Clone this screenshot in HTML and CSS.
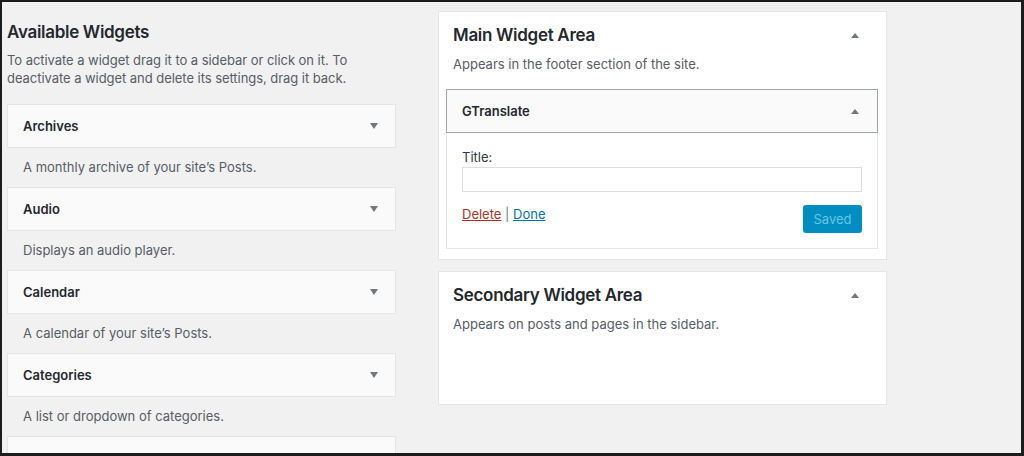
FILE: index.html
```html
<!DOCTYPE html>
<html lang="en">
<head>
<meta charset="utf-8">
<title>Widgets</title>
<link rel="stylesheet" href="styles.css">
</head>
<body>
<div class="frame">
  <div class="page">
    <section class="available">
      <h2 class="available-title">Available Widgets</h2>
      <p class="intro">To activate a widget drag it to a sidebar or click on it. To deactivate a widget and delete its settings, drag it back.</p>
      <ul class="widget-list">
        <li class="widget">
          <div class="widget-top"><span class="widget-name">Archives</span><span class="arrow-down"></span></div>
          <p class="widget-desc">A monthly archive of your site’s Posts.</p>
        </li>
        <li class="widget">
          <div class="widget-top"><span class="widget-name">Audio</span><span class="arrow-down"></span></div>
          <p class="widget-desc">Displays an audio player.</p>
        </li>
        <li class="widget">
          <div class="widget-top"><span class="widget-name">Calendar</span><span class="arrow-down"></span></div>
          <p class="widget-desc">A calendar of your site’s Posts.</p>
        </li>
        <li class="widget">
          <div class="widget-top"><span class="widget-name">Categories</span><span class="arrow-down"></span></div>
          <p class="widget-desc">A list or dropdown of categories.</p>
        </li>
        <li class="widget">
          <div class="widget-top"><span class="widget-name">Custom HTML</span><span class="arrow-down"></span></div>
          <p class="widget-desc">Arbitrary HTML code.</p>
        </li>
      </ul>
    </section>
    <section class="areas">
      <div class="area">
        <div class="area-head">
          <h2 class="area-title">Main Widget Area</h2>
          <span class="arrow-up"></span>
        </div>
        <p class="area-desc">Appears in the footer section of the site.</p>
        <div class="area-body">
          <div class="open-widget">
            <div class="open-top"><span class="widget-name">GTranslate</span><span class="arrow-up"></span></div>
            <div class="open-inside">
              <label class="field-label" for="gt-title">Title:</label>
              <input class="field-input" id="gt-title" type="text">
              <div class="actions">
                <div class="links"><a class="link-delete" href="#">Delete</a> <span class="sep">|</span> <a class="link-done" href="#">Done</a></div>
                <button class="btn-saved" type="button" disabled>Saved</button>
              </div>
            </div>
          </div>
        </div>
      </div>
      <div class="area">
        <div class="area-head">
          <h2 class="area-title">Secondary Widget Area</h2>
          <span class="arrow-up"></span>
        </div>
        <p class="area-desc">Appears on posts and pages in the sidebar.</p>
        <div class="area-body"></div>
      </div>
    </section>
  </div>
</div>
</body>
</html>
```

FILE: styles.css
```css
* { box-sizing: border-box; }

html, body {
  margin: 0;
  padding: 0;
}

body {
  font-family: Inter, "Liberation Sans", Arial, sans-serif;
  font-size: 13px;
  color: #23282d;
}

.frame {
  width: 1024px;
  height: 456px;
  overflow: hidden;
  background: #f1f1f1;
  border-style: solid;
  border-color: #1c1c1c;
  border-width: 2px 3px 3px 2px;
}

.page {
  display: flex;
  align-items: flex-start;
  gap: 42px;
  padding: 9px 0 0 5px;
}

.available {
  width: 389px;
  flex: none;
}

.available-title {
  margin: 10px 0 0;
  font-size: 17px;
  letter-spacing: -0.3px;
  line-height: 23px;
  font-weight: 600;
  color: #23282d;
}

.intro {
  margin: 7px 0 0;
  line-height: 18px;
  letter-spacing: -0.05px;
  color: #555d66;
}

.widget-list {
  list-style: none;
  margin: 17px 0 0;
  padding: 0;
}

.widget-top {
  height: 44px;
  display: flex;
  align-items: center;
  justify-content: space-between;
  padding: 0 17px 0 15px;
  background: #fafafa;
  border: 1px solid #e5e5e5;
}

.widget-name {
  font-weight: 600;
  color: #23282d;
}

.arrow-down {
  width: 0;
  height: 0;
  border-left: 4.5px solid transparent;
  border-right: 4.5px solid transparent;
  border-top: 6px solid #72777c;
}

.arrow-up {
  width: 0;
  height: 0;
  border-left: 4px solid transparent;
  border-right: 4px solid transparent;
  border-bottom: 5px solid #72777c;
}

.widget-desc {
  margin: 0;
  padding: 10px 16px 11px;
  line-height: 18px;
  color: #555d66;
}

.areas {
  width: 449px;
  flex: none;
  display: flex;
  flex-direction: column;
  gap: 11px;
}

.area {
  background: #fff;
  border: 1px solid #e5e5e5;
}

.area-head {
  display: flex;
  align-items: center;
  justify-content: space-between;
  padding: 12px 27px 0 14px;
}

.area-title {
  margin: 0;
  font-size: 17px;
  letter-spacing: -0.3px;
  line-height: 23px;
  font-weight: 600;
  color: #23282d;
}

.area-desc {
  margin: 8px 0 0;
  padding: 0 14px;
  line-height: 18px;
  color: #555d66;
}

.area-body {
  padding: 16px 8px 10px 7px;
  min-height: 71px;
}

.open-top {
  height: 44px;
  display: flex;
  align-items: center;
  justify-content: space-between;
  padding: 0 18px 0 15px;
  background: #fafafa;
  border: 1px solid #a0a5aa;
}

.open-inside {
  display: flex;
  flex-direction: column;
  padding: 15px 15px 15px;
  border: 1px solid #e5e5e5;
  border-top: none;
  background: #fff;
}

.field-label {
  line-height: 18px;
  color: #32373c;
}

.field-input {
  margin: 1px 0 0;
  height: 25px;
  width: 100%;
  border: 1px solid #ddd;
  background: #fff;
  font: inherit;
  padding: 0 6px;
}

.actions {
  display: flex;
  justify-content: space-between;
  align-items: flex-start;
  margin-top: 13px;
}

.links {
  line-height: 18px;
  color: #72777c;
}

.link-delete {
  color: #a3321c;
  text-decoration: underline;
}

.link-done {
  color: #0073aa;
  text-decoration: underline;
}

.btn-saved {
  width: 59px;
  height: 28px;
  border: none;
  border-radius: 3px;
  background: #008ec2;
  color: #66c6e4;
  font: inherit;
  padding: 0;
}
```
